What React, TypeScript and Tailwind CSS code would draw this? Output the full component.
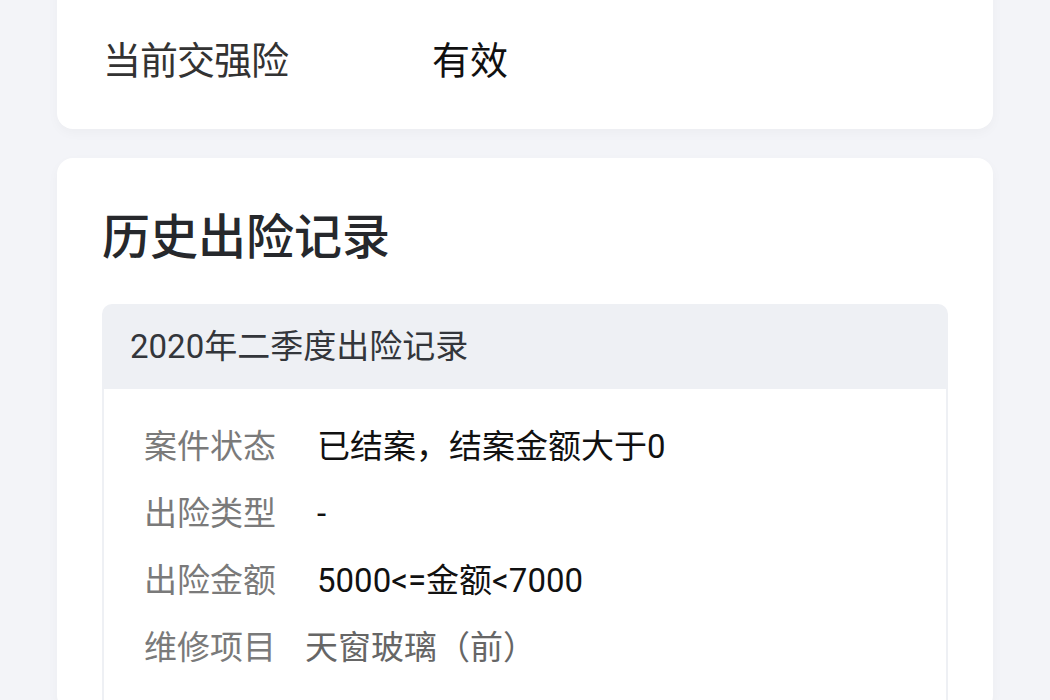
import React from "react";

const font = { fontFamily: '"Roboto", "Noto Sans CJK SC", sans-serif' };

function InfoRow({ label, value, className = "" }: { label: string; value: string; className?: string }) {
  return (
    <div className={`flex h-[77px] items-center text-[38px] ${className}`}>
      <span className="w-[329px] shrink-0 text-[#333] tracking-[-1px]">{label}</span>
      <span className="text-[#111]">{value}</span>
    </div>
  );
}

function RecordRow({
  label,
  value,
  valueClass,
}: {
  label: string;
  value: string;
  valueClass: string;
}) {
  return (
    <div className="flex h-[67px] items-center text-[33px] leading-none">
      <span className="shrink-0 text-[#7a7a7a]">{label}</span>
      <span className={valueClass}>{value}</span>
    </div>
  );
}

export default function App() {
  return (
    <div
      className="flex h-[700px] w-[1050px] flex-col overflow-hidden bg-[#f3f4f8] px-[57px]"
      style={font}
    >
      <div className="mt-[-79px] rounded-[16px] bg-white px-[46px] pt-[20px] pb-[29px] shadow-[0_4px_12px_rgba(0,0,0,0.03)]">
        <InfoRow label="当前商业险" value="有效" className="mb-[5px]" />
        <InfoRow label="当前交强险" value="有效" />
      </div>

      <div className="mt-[29px] rounded-[16px] bg-white px-[45px] pt-[56px] shadow-[0_4px_12px_rgba(0,0,0,0.03)]">
        <div className="text-[48px] font-medium leading-none text-[#26282c]">历史出险记录</div>

        <div className="mt-[42px] overflow-hidden rounded-t-[10px]">
          <div className="flex h-[85px] items-center bg-[#eef0f4] pl-[28px] text-[33px] text-[#33363b]">
            2020年二季度出险记录
          </div>
          <div className="border-x-2 border-[#eef0f4] pt-[24px] pb-[30px] pl-[40px]">
            <RecordRow label="案件状态" value="已结案，结案金额大于0" valueClass="ml-[41px] text-[#111]" />
            <RecordRow label="出险类型" value="-" valueClass="ml-[41px] text-[#111]" />
            <RecordRow label="出险金额" value="5000<=金额<7000" valueClass="ml-[41px] text-[#111]" />
            <RecordRow label="维修项目" value="天窗玻璃（前）" valueClass="ml-[29px] text-[#666]" />
          </div>
        </div>
      </div>
    </div>
  );
}
